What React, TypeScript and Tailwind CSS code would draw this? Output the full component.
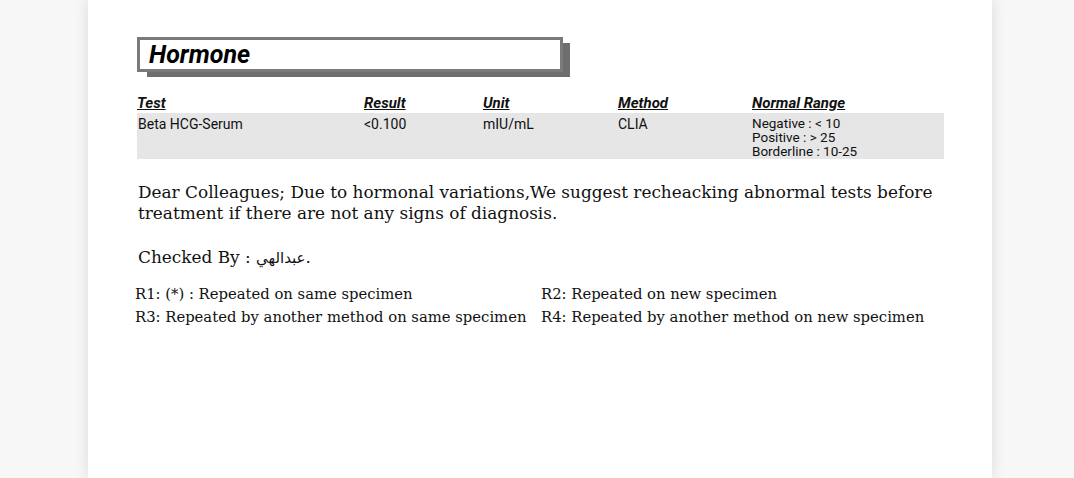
import React from 'react';

const rows = [
  {
    test: 'Beta HCG-Serum',
    result: '<0.100',
    unit: 'mIU/mL',
    method: 'CLIA',
    range: ['Negative : < 10', 'Positive : > 25', 'Borderline : 10-25'],
  },
];

const notes = [
  'R1: (*) : Repeated on same specimen',
  'R2: Repeated on new specimen',
  'R3: Repeated by another method on same specimen',
  'R4: Repeated by another method on new specimen',
];

export default function App() {
  return (
    <div className="w-full h-[478px] overflow-hidden bg-[#f7f7f7] pl-[88px]">
      <div className="w-[904px] h-full bg-white shadow-[0_0_14px_rgba(0,0,0,0.12)] pl-[49px] pt-[37px]">
        {/* Section title */}
        <div className="relative w-[426px] h-[35px]">
          <div className="absolute left-[10px] top-[6px] w-[423px] h-[34px] bg-[#6e6e6e]" />
          <div className="absolute inset-0 bg-white border-[3px] border-[#7a7a7a] flex items-center pl-[9px]">
            <span className="font-['Roboto',sans-serif] font-bold italic text-[25px] leading-none text-black">
              Hormone
            </span>
          </div>
        </div>

        {/* Results table */}
        <div className="w-[807px] mt-[22px] font-['Roboto',sans-serif] text-[#111]">
          <div className="grid grid-cols-[227px_119px_135px_134px_1fr] text-[15px] leading-[19px] font-bold italic underline">
            <span>Test</span>
            <span>Result</span>
            <span>Unit</span>
            <span>Method</span>
            <span>Normal Range</span>
          </div>
          {rows.map((r) => (
            <div
              key={r.test}
              className="grid grid-cols-[227px_119px_135px_134px_1fr] bg-[#e6e6e6] h-[46px] text-[14px] leading-[14px] pt-[4px]"
            >
              <span className="pl-[1px]">{r.test}</span>
              <span>{r.result}</span>
              <span>{r.unit}</span>
              <span>{r.method}</span>
              <div className="flex flex-col text-[13.5px] leading-[14px] -mt-[1px]">
                {r.range.map((l) => (
                  <span key={l}>{l}</span>
                ))}
              </div>
            </div>
          ))}
        </div>

        {/* Comment */}
        <div className="font-['DejaVu_Serif',serif] text-[#111] pl-[1px]">
          <p className="mt-[23px] text-[16.9px] leading-[21px] w-[810px]">
            Dear Colleagues; Due to hormonal variations,We suggest recheacking abnormal tests before
            treatment if there are not any signs of diagnosis.
          </p>
          <p className="mt-[23px] text-[16.9px] leading-[21px]">
            Checked By : <span className="font-['DejaVu_Sans',sans-serif] text-[15px]">عبدالهي</span>.
          </p>
        </div>

        {/* Repeat legend */}
        <div className="mt-[13px] ml-[-2px] grid grid-cols-[406px_1fr] font-['DejaVu_Serif',serif] text-[14.8px] leading-[23px] text-[#111]">
          {notes.map((n) => (
            <span key={n} className="whitespace-nowrap">
              {n}
            </span>
          ))}
        </div>
      </div>
    </div>
  );
}
